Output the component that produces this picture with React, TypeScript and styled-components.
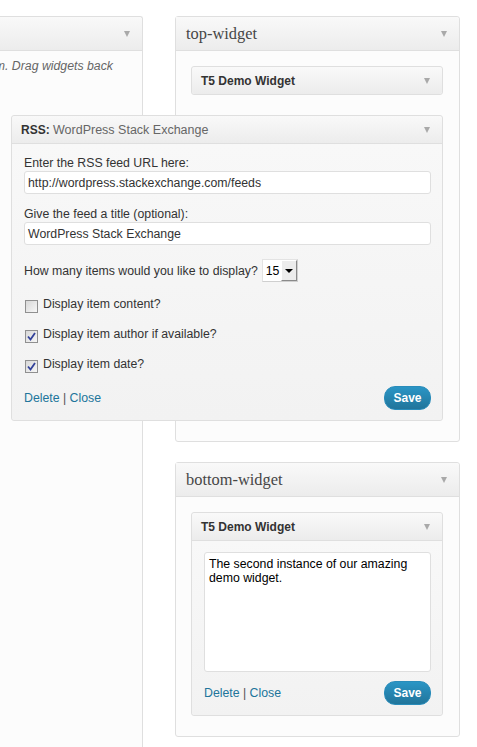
import React from 'react';
import styled, { createGlobalStyle } from 'styled-components';

const GlobalStyle = createGlobalStyle`
  html, body {
    margin: 0;
    padding: 0;
    background: #fff;
    overflow: hidden;
  }
  body {
    font-family: "Liberation Sans", Arial, sans-serif;
    font-size: 12.3px;
    color: #333;
  }
  * {
    box-sizing: border-box;
  }
`;

const Screen = styled.div`
  position: relative;
  width: 477px;
  height: 747px;
  overflow: hidden;
`;

const Page = styled.div`
  display: flex;
  align-items: flex-start;
  gap: 32px;
  padding-top: 16px;
`;

const AvailableHolder = styled.div`
  width: 143px;
  height: 760px;
  flex-shrink: 0;
  background: #fcfcfc;
  border: 1px solid #dfdfdf;
  border-left: none;
  border-bottom: none;
  border-top-right-radius: 3px;
`;

const HolderHeader = styled.div`
  height: 34px;
  display: flex;
  align-items: center;
  justify-content: space-between;
  padding: 0 12px 0 10px;
  background: linear-gradient(#f9f9f9, #ececec);
  border-bottom: 1px solid #dfdfdf;
  border-top-right-radius: 3px;
`;

const HolderTitle = styled.h3`
  margin: 0;
  font-family: "Liberation Serif", Georgia, serif;
  font-size: 16.4px;
  font-weight: normal;
  color: #464646;
`;

const Arrow = styled.span`
  display: block;
  width: 0;
  height: 0;
  border-left: 3.5px solid transparent;
  border-right: 3.5px solid transparent;
  border-top: 6px solid #a9a9a9;
  margin-left: auto;
`;

const HolderHint = styled.div`
  display: flex;
  justify-content: flex-end;
  overflow: hidden;
  padding: 7px 29px 0 0;
  line-height: 16px;
  font-style: italic;
  color: #666;
  white-space: nowrap;
`;

const RightColumn = styled.div`
  width: 285px;
  display: flex;
  flex-direction: column;
  gap: 20px;
`;

const Sidebar = styled.div`
  background: #fcfcfc;
  border: 1px solid #dfdfdf;
  border-radius: 3px;
`;

const SidebarBody = styled.div<{ $minHeight?: number }>`
  padding: 15px 16px 20px 15px;
  min-height: ${p => (p.$minHeight ? `${p.$minHeight}px` : 'auto')};
`;

const Widget = styled.div`
  background: #f5f5f5;
  border: 1px solid #dfdfdf;
  border-radius: 3px;
`;

const DraggedWidget = styled(Widget)`
  position: absolute;
  left: 11px;
  top: 115px;
  width: 432px;
`;

const WidgetTop = styled.div<{ $open?: boolean }>`
  height: ${p => (p.$open ? 28 : 27)}px;
  display: flex;
  align-items: center;
  padding: 0 12px 0 9px;
  background: linear-gradient(#f9f9f9, #ececec);
  border-bottom: ${p => (p.$open ? '1px solid #dfdfdf' : 'none')};
  border-radius: ${p => (p.$open ? '3px 3px 0 0' : '3px')};
`;

const WidgetTitle = styled.h4`
  margin: 0;
  font-size: 12px;
  font-weight: bold;
  color: #333;
  white-space: nowrap;
`;

const InWidgetTitle = styled.span`
  font-size: 12.5px;
  font-weight: normal;
  color: #666;
`;

const WidgetInside = styled.div`
  padding: 11px 11px 10px 12px;
  background: linear-gradient(#f8f8f8, #f2f2f2);
  border-radius: 0 0 3px 3px;
`;

const Label = styled.label<{ $gap?: number }>`
  display: block;
  margin-top: ${p => p.$gap ?? 0}px;
  line-height: 16px;
  color: #333;
`;

const TextInput = styled.div`
  height: 23px;
  display: flex;
  align-items: center;
  padding: 0 3px;
  background: #fff;
  border: 1px solid #dfdfdf;
  border-radius: 3px;
  color: #333;
  white-space: nowrap;
  overflow: hidden;
`;

const InlineRow = styled.div`
  margin-top: 14px;
  height: 23px;
  display: flex;
  align-items: center;
  gap: 4px;
`;

const Select = styled.div`
  width: 36px;
  height: 23px;
  display: flex;
  background: #fff;
  border: 1px solid #e3e3e3;
  border-right-color: #cfcfcf;
  border-bottom-color: #cfcfcf;
`;

const SelectValue = styled.span`
  flex: 1;
  display: flex;
  align-items: center;
  padding-left: 3px;
  color: #000;
`;

const SelectButton = styled.span`
  width: 16px;
  display: flex;
  align-items: center;
  justify-content: center;
  background: #ececec;
  border: 1px solid #fff;
  border-right-color: #8a8a8a;
  border-bottom-color: #8a8a8a;
`;

const SelectArrow = styled.span`
  width: 0;
  height: 0;
  border-left: 4px solid transparent;
  border-right: 4px solid transparent;
  border-top: 4px solid #000;
`;

const CheckRow = styled.div`
  margin-top: 14px;
  height: 16px;
  display: flex;
  align-items: center;
  gap: 5px;
  padding-left: 1px;
`;

const CheckBox = styled.span`
  width: 13px;
  height: 13px;
  margin-top: 4px;
  display: flex;
  align-items: center;
  justify-content: center;
  border: 1px solid #909090;
  background: linear-gradient(135deg, #d8d8d8, #f7f7f7);
`;

const CheckLabel = styled.span`
  line-height: 16px;
  color: #333;
`;

const Textarea = styled.div`
  height: 120px;
  padding: 4px 3px 0 4px;
  background: #fff;
  border: 1px solid #dfdfdf;
  border-radius: 3px;
  color: #000;
`;

const Controls = styled.div<{ $gap: number }>`
  margin-top: ${p => p.$gap}px;
  height: 24px;
  display: flex;
  align-items: center;
  justify-content: space-between;
`;

const Links = styled.div`
  color: #555;
`;

const Link = styled.a`
  color: #21759b;
  text-decoration: none;
  cursor: pointer;
`;

const SaveButton = styled.button`
  width: 47px;
  height: 24px;
  padding: 0;
  border: 1px solid #298cba;
  border-radius: 11px;
  background: linear-gradient(#2a95c5, #21759b);
  color: #fff;
  font-family: "Liberation Sans", Arial, sans-serif;
  font-size: 12px;
  font-weight: bold;
  cursor: pointer;
`;

const Check = () => (
  <svg width="9" height="9" viewBox="0 0 9 9">
    <path d="M1 4.5 L3.5 7.5 L8 1" fill="none" stroke="#33429a" strokeWidth="1.8" />
  </svg>
);

const Option: React.FC<{ checked?: boolean; label: string }> = ({ checked, label }) => (
  <CheckRow>
    <CheckBox>{checked && <Check />}</CheckBox>
    <CheckLabel>{label}</CheckLabel>
  </CheckRow>
);

const FormFooter: React.FC<{ gap: number }> = ({ gap }) => (
  <Controls $gap={gap}>
    <Links>
      <Link>Delete</Link> | <Link>Close</Link>
    </Links>
    <SaveButton>Save</SaveButton>
  </Controls>
);

const App: React.FC = () => {
  return (
    <Screen>
      <GlobalStyle />
      <Page>
        <AvailableHolder>
          <HolderHeader>
            <Arrow />
          </HolderHeader>
          <HolderHint>
            Drag widgets from here to a sidebar on the right to activate them. Drag widgets back
          </HolderHint>
        </AvailableHolder>

        <RightColumn>
          <Sidebar>
            <HolderHeader>
              <HolderTitle>top-widget</HolderTitle>
              <Arrow />
            </HolderHeader>
            <SidebarBody $minHeight={390}>
              <Widget>
                <WidgetTop>
                  <WidgetTitle>T5 Demo Widget</WidgetTitle>
                  <Arrow />
                </WidgetTop>
              </Widget>
            </SidebarBody>
          </Sidebar>

          <Sidebar>
            <HolderHeader>
              <HolderTitle>bottom-widget</HolderTitle>
              <Arrow />
            </HolderHeader>
            <SidebarBody>
              <Widget>
                <WidgetTop $open>
                  <WidgetTitle>T5 Demo Widget</WidgetTitle>
                  <Arrow />
                </WidgetTop>
                <WidgetInside>
                  <Textarea>The second instance of our amazing demo widget.</Textarea>
                  <FormFooter gap={9} />
                </WidgetInside>
              </Widget>
            </SidebarBody>
          </Sidebar>
        </RightColumn>
      </Page>

      <DraggedWidget>
        <WidgetTop $open>
          <WidgetTitle>
            RSS: <InWidgetTitle>WordPress Stack Exchange</InWidgetTitle>
          </WidgetTitle>
          <Arrow />
        </WidgetTop>
        <WidgetInside>
          <Label>Enter the RSS feed URL here:</Label>
          <TextInput>http://wordpress.stackexchange.com/feeds</TextInput>
          <Label $gap={12}>Give the feed a title (optional):</Label>
          <TextInput>WordPress Stack Exchange</TextInput>
          <InlineRow>
            <CheckLabel>How many items would you like to display?</CheckLabel>
            <Select>
              <SelectValue>15</SelectValue>
              <SelectButton>
                <SelectArrow />
              </SelectButton>
            </Select>
          </InlineRow>
          <Option label="Display item content?" />
          <Option checked label="Display item author if available?" />
          <Option checked label="Display item date?" />
          <FormFooter gap={14} />
        </WidgetInside>
      </DraggedWidget>
    </Screen>
  );
};

export default App;
